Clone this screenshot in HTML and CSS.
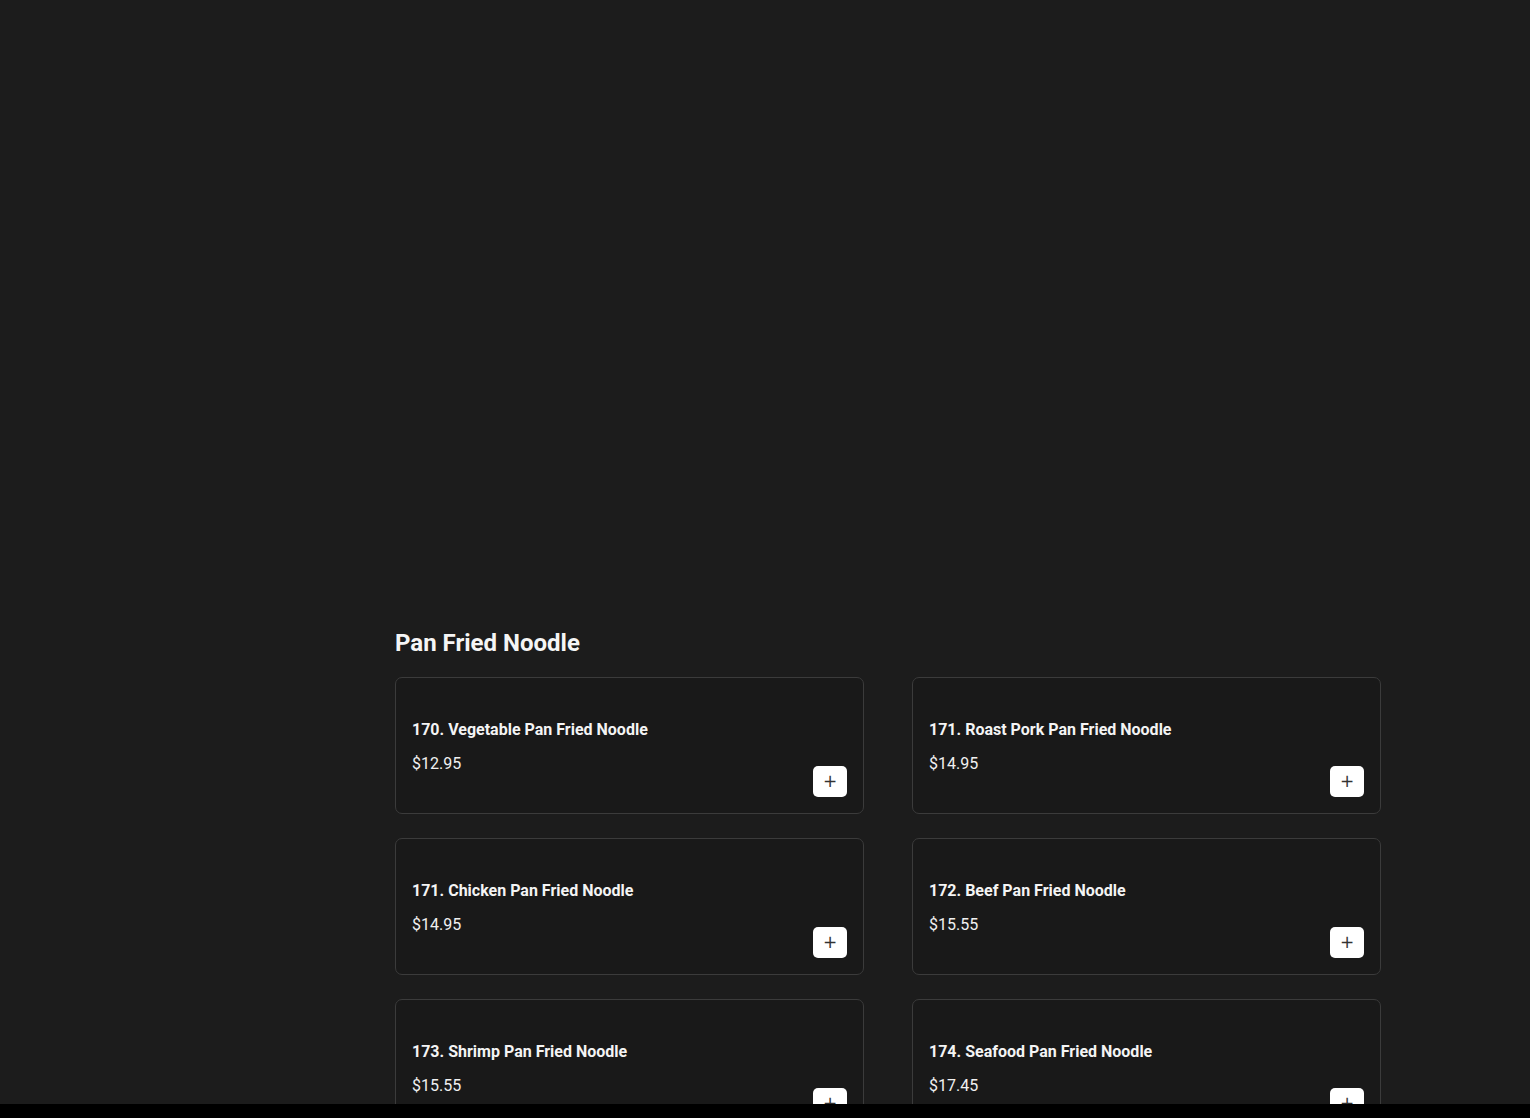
FILE: index.html
```html
<!DOCTYPE html>
<html lang="en">
<head>
    <meta charset="UTF-8">
    <meta name="viewport" content="width=device-width, initial-scale=1.0">
    <title>Pan Fried Noodle</title>
    <link rel="stylesheet" href="styles.css">
</head>
<body>
    <div class="hero"></div>
    <section class="category">
        <h2 class="category-title">Pan Fried Noodle</h2>
        <div class="items">
            <div class="item">
                <div class="item-name">170. Vegetable Pan Fried Noodle</div>
                <div class="item-row">
                    <div class="item-price">$12.95</div>
                    <button class="add">+</button>
                </div>
            </div>
            <div class="item">
                <div class="item-name">171. Roast Pork Pan Fried Noodle</div>
                <div class="item-row">
                    <div class="item-price">$14.95</div>
                    <button class="add">+</button>
                </div>
            </div>
            <div class="item">
                <div class="item-name">171. Chicken Pan Fried Noodle</div>
                <div class="item-row">
                    <div class="item-price">$14.95</div>
                    <button class="add">+</button>
                </div>
            </div>
            <div class="item">
                <div class="item-name">172. Beef Pan Fried Noodle</div>
                <div class="item-row">
                    <div class="item-price">$15.55</div>
                    <button class="add">+</button>
                </div>
            </div>
            <div class="item">
                <div class="item-name">173. Shrimp Pan Fried Noodle</div>
                <div class="item-row">
                    <div class="item-price">$15.55</div>
                    <button class="add">+</button>
                </div>
            </div>
            <div class="item">
                <div class="item-name">174. Seafood Pan Fried Noodle</div>
                <div class="item-row">
                    <div class="item-price">$17.45</div>
                    <button class="add">+</button>
                </div>
            </div>
        </div>
    </section>
    <div class="bottom-bar"></div>
</body>
</html>
```

FILE: styles.css
```css
body {
    margin: 0;
    background-color: #1c1c1c;
    color: #f2f2f2;
    font-family: Roboto, "Noto Sans", Arial, sans-serif;
}

.hero {
    height: 626px;
}

.category {
    width: 986px;
    margin-left: 395px;
}

.category-title {
    margin: 0 0 17px;
    font-size: 24px;
    line-height: 34px;
    font-weight: 700;
    color: #f5f5f5;
}

.items {
    display: grid;
    grid-template-columns: repeat(2, 469px);
    column-gap: 48px;
    row-gap: 24px;
}

.item {
    background-color: #191919;
    border: 1px solid #3b3b3b;
    border-radius: 7px;
    padding: 40px 16px 16px;
}

.item-name {
    font-size: 16px;
    font-weight: 700;
    line-height: 24px;
    color: #f4f4f4;
    margin-bottom: 10px;
}

.item-row {
    display: flex;
    justify-content: space-between;
    align-items: flex-start;
    height: 45px;
}

.item-price {
    font-size: 16px;
    line-height: 24px;
    color: #f0f0f0;
}

.add {
    align-self: flex-end;
    width: 34px;
    height: 31px;
    padding: 0;
    border: none;
    border-radius: 5px;
    background-color: #fff;
    color: #333;
    font-family: "DejaVu Sans", sans-serif;
    font-size: 17px;
    line-height: 31px;
    cursor: pointer;
}

.bottom-bar {
    position: fixed;
    left: 0;
    right: 0;
    bottom: 0;
    height: 14px;
    background-color: #000;
}
```
